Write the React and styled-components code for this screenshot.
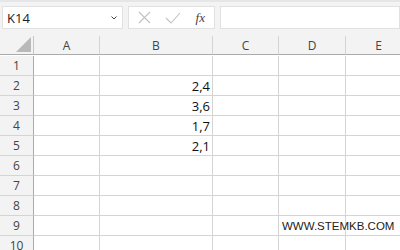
import styled, { createGlobalStyle } from "styled-components"

const GlobalStyle = createGlobalStyle`
  html, body {
    margin: 0;
    padding: 0;
    background: #ffffff;
    font-family: "Open Sans", "Liberation Sans", sans-serif;
    overflow: hidden;
  }
`

const Page = styled.div`
  width: 400px;
  height: 250px;
  overflow: hidden;
  background: #ffffff;
`

const FormulaBar = styled.div`
  display: flex;
  align-items: center;
  gap: 5px;
  height: 36px;
  padding: 0 0 3px 2px;
  box-sizing: border-box;
  background: #f3f3f3;
  border-top: 2px solid #e6e6e6;
`

const Box = styled.div`
  height: 23px;
  box-sizing: border-box;
  background: #ffffff;
  border: 1px solid #e1e1e1;
  display: flex;
  align-items: center;
`

const NameBox = styled(Box)`
  width: 121px;
  padding: 0 4px 0 4px;
  justify-content: space-between;
  font-size: 13px;
  color: #222;
`

const IconBox = styled(Box)`
  width: 87px;
  padding: 0 9px 0 9px;
  justify-content: space-between;
`

const FxLabel = styled.span`
  font-family: "Liberation Serif", serif;
  font-style: italic;
  font-size: 13px;
  color: #444;
`

const InputBox = styled(Box)`
  flex: 1;
`

const Grid = styled.div`
  display: grid;
  grid-template-columns: 34px 66px 113px 66px 67px 66px;
  grid-auto-rows: 20px;
`

const Corner = styled.div`
  background: #f3f3f3;
  border-right: 1px solid #c6c6c6;
  border-bottom: 1px solid #ababab;
  box-sizing: border-box;
  position: relative;
  height: 19px;
  &::after {
    content: "";
    position: absolute;
    right: 2px;
    bottom: 2px;
    width: 0;
    height: 0;
    border-left: 15px solid transparent;
    border-bottom: 15px solid #b9b9b9;
  }
`

const ColHead = styled.div`
  background: #f3f3f3;
  border-right: 1px solid #d4d4d4;
  border-bottom: 1px solid #ababab;
  box-sizing: border-box;
  height: 19px;
  display: flex;
  align-items: center;
  justify-content: center;
  font-size: 12px;
  color: #444;
`

const RowHead = styled.div`
  background: #f3f3f3;
  border-right: 1px solid #ababab;
  border-bottom: 1px solid #d4d4d4;
  box-sizing: border-box;
  display: flex;
  align-items: center;
  justify-content: center;
  font-size: 12px;
  color: #444;
`

const Cell = styled.div`
  border-right: 1px solid #d4d4d4;
  border-bottom: 1px solid #d4d4d4;
  box-sizing: border-box;
  display: flex;
  align-items: center;
  justify-content: ${(p) => (p.$num ? "flex-end" : "flex-start")};
  padding: 0 2px 0 3px;
  font-size: 13px;
  color: #111;
  white-space: nowrap;
  overflow: visible;
  position: relative;
  z-index: ${(p) => (p.$over ? 1 : 0)};
`

const Overflow = styled.span`
  font-family: "Liberation Sans", sans-serif;
  font-size: 11.5px;
  color: #222;
`

const Row = styled.div`
  display: contents;
`

const cols = ["A", "B", "C", "D", "E"]
const values = { 2: "2,4", 3: "3,6", 4: "1,7", 5: "2,1" }

const Chevron = () => (
  <svg width="8" height="6" viewBox="0 0 8 6">
    <path d="M1.5 1.5 L4 4 L6.5 1.5" fill="none" stroke="#444" strokeWidth="1" />
  </svg>
)

const Cross = () => (
  <svg width="13" height="13" viewBox="0 0 13 13">
    <path d="M1 1 L12 12 M12 1 L1 12" stroke="#c2c2c2" strokeWidth="1.1" />
  </svg>
)

const Check = () => (
  <svg width="16" height="14" viewBox="0 0 16 14">
    <path d="M1 7 L6 12 L15 2" fill="none" stroke="#c2c2c2" strokeWidth="1.1" />
  </svg>
)

export default function App() {
  return (
    <Page>
      <GlobalStyle />
      <FormulaBar>
        <NameBox>
          <span>K14</span>
          <Chevron />
        </NameBox>
        <IconBox>
          <Cross />
          <Check />
          <FxLabel>fx</FxLabel>
        </IconBox>
        <InputBox />
      </FormulaBar>
      <Grid>
        <Row>
          <Corner />
          {cols.map((c) => (
            <ColHead key={c}>{c}</ColHead>
          ))}
        </Row>
        {Array.from({ length: 10 }, (_, i) => i + 1).map((r) => (
          <Row key={r}>
            <RowHead>{r}</RowHead>
            <Cell />
            <Cell $num>{values[r] || ""}</Cell>
            <Cell />
            <Cell $over={r === 9}>
              {r === 9 && <Overflow>WWW.STEMKB.COM</Overflow>}
            </Cell>
            <Cell />
          </Row>
        ))}
      </Grid>
    </Page>
  )
}
